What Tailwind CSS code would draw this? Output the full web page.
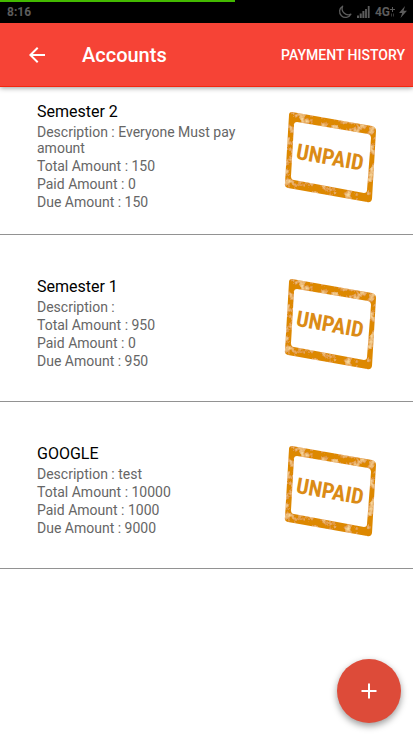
<!DOCTYPE html>
<html lang="en">
<head>
<meta charset="utf-8">
<meta name="viewport" content="width=device-width, initial-scale=1">
<title>Accounts</title>
<script src="https://cdn.jsdelivr.net/npm/@tailwindcss/browser@4"></script>
</head>
<body class="flex min-h-screen flex-col bg-white font-['Roboto',sans-serif]">
<svg class="absolute size-0" aria-hidden="true">
  <defs>
    <filter id="grain" x="0" y="0" width="100%" height="100%">
      <feTurbulence type="fractalNoise" baseFrequency="0.13" numOctaves="4" seed="7" result="noise"/>
      <feColorMatrix in="noise" type="matrix" values="0 0 0 0 0.94  0 0 0 0 0.72  0 0 0 0 0.36  0 3 0 0 -1.5" result="specks"/>
      <feComposite in="specks" in2="SourceGraphic" operator="in" result="inside"/>
      <feMerge><feMergeNode in="SourceGraphic"/><feMergeNode in="inside"/></feMerge>
    </filter>
    <symbol id="stamp" viewBox="0 0 112 112">
      <g filter="url(#grain)">
        <path fill="#dd8805" fill-rule="evenodd" d="M17 10 L97 24 Q101 25 101 29 L97 97 Q96 101 92 100 L13 86 Q9 85 10 81 L14 13 Q14 10 17 10Z M22 20 Q19 20 19 23 L16 74 Q16 78 19 78 L89 91 Q92 91 92 88 L96 36 Q96 33 93 32Z"/>
      </g>
      <text transform="rotate(10 56 56)" x="55" y="63" text-anchor="middle" fill="#db8b16" font-size="22" font-weight="700" font-family="'Liberation Sans Narrow','Roboto Condensed','Roboto',sans-serif">UNPAID</text>
    </symbol>
  </defs>
</svg>

<div class="relative flex h-[23px] items-center justify-between bg-black pl-[7px] pr-[6px] text-[12px] leading-none font-bold text-[#5c5c5c]">
  <div class="absolute top-0 left-0 h-[2px] w-[57%] bg-[#43b900]"></div>
  <span>8:16</span>
  <div class="flex items-center gap-[5px]">
    <svg class="size-[14px]" viewBox="0 0 14 14" fill="none" stroke="currentColor" stroke-width="1.3" stroke-linejoin="round" aria-hidden="true"><path d="M4.6 1.2A6 6 0 1 0 12.9 9.2A6.2 6.2 0 0 1 4.6 1.2Z"/></svg>
    <svg class="h-[12px] w-[13px]" viewBox="0 0 13 12" fill="currentColor" aria-hidden="true"><path d="M0 9.5h2V12H0zM2.7 7.500h2V12h-2zM5.400 5h2v7h-2zM8.100 3h1.800v9H8.100zM10.800 0h1.800v12h-1.800z"/></svg>
    <div class="flex items-center">
      <span>4G</span>
      <svg class="h-[12px] w-[5px]" viewBox="0 0 5 12" fill="none" stroke="currentColor" aria-hidden="true"><path d="M2.500 1v5M0 3.500h5"/><path d="M1.500 7.500v3M3.500 7.500v3" stroke-opacity=".6"/></svg>
      <svg class="ml-[4px] h-[12px] w-[8px]" viewBox="0 0 8 12" fill="currentColor" aria-hidden="true"><path d="M6 0L0 7h3.200L1.500 12L8 4.800H4.600Z"/></svg>
    </div>
  </div>
</div>

<header class="relative flex h-16 items-center border-b border-[#f4260f] bg-[#f64336] pr-[8px] pl-[25px] text-white shadow-[0_1px_5px_rgba(0,0,0,0.4)]">
  <button type="button" aria-label="Back" class="flex size-6 items-center justify-center">
    <svg class="size-6" viewBox="0 0 24 24" fill="currentColor" aria-hidden="true"><path d="M20 11H7.830l5.590-5.590L12 4l-8 8 8 8 1.410-1.410L7.830 13H20v-2z"/></svg>
  </button>
  <h1 class="ml-[33px] text-[20px] leading-6 font-medium">Accounts</h1>
  <a href="#" class="ml-auto text-[14px] leading-5 font-medium">PAYMENT HISTORY</a>
</header>

<main>
  <ul>
    <li class="flex items-center justify-between border-b border-[#929292] pt-[15px] pr-[26px] pb-[20px] pl-[37px]">
      <div class="w-[210px] space-y-[2px] pb-1 text-[14px] leading-4 text-[#666666]">
        <h2 class="text-[16px] leading-5 text-black">Semester 2</h2>
        <p>Description : Everyone Must pay amount</p>
        <p>Total Amount : 150</p>
        <p>Paid Amount : 0</p>
        <p>Due Amount : 150</p>
      </div>
      <svg class="size-28" role="img" aria-label="Unpaid"><use href="#stamp"/></svg>
    </li>
    <li class="flex items-center justify-between border-b border-[#929292] pt-[34px] pr-[26px] pb-[20px] pl-[37px]">
      <div class="w-[210px] space-y-[2px] pb-1 text-[14px] leading-4 text-[#666666]">
        <h2 class="text-[16px] leading-5 text-black">Semester 1</h2>
        <p>Description :</p>
        <p>Total Amount : 950</p>
        <p>Paid Amount : 0</p>
        <p>Due Amount : 950</p>
      </div>
      <svg class="size-28" role="img" aria-label="Unpaid"><use href="#stamp"/></svg>
    </li>
    <li class="flex items-center justify-between border-b border-[#929292] pt-[34px] pr-[26px] pb-[20px] pl-[37px]">
      <div class="w-[210px] space-y-[2px] pb-1 text-[14px] leading-4 text-[#666666]">
        <h2 class="text-[16px] leading-5 text-black">GOOGLE</h2>
        <p>Description : test</p>
        <p>Total Amount : 10000</p>
        <p>Paid Amount : 1000</p>
        <p>Due Amount : 9000</p>
      </div>
      <svg class="size-28" role="img" aria-label="Unpaid"><use href="#stamp"/></svg>
    </li>
  </ul>
</main>

<button type="button" aria-label="Add account" class="fixed right-[12px] bottom-[12px] flex size-16 items-center justify-center rounded-full bg-[#dd4b39] text-white shadow-[0_3px_7px_rgba(0,0,0,0.4)]">
  <svg class="size-4" viewBox="0 0 16 16" fill="none" stroke="currentColor" stroke-width="2" aria-hidden="true"><path d="M8 0.500v15M0.500 8h15"/></svg>
</button>
</body>
</html>
